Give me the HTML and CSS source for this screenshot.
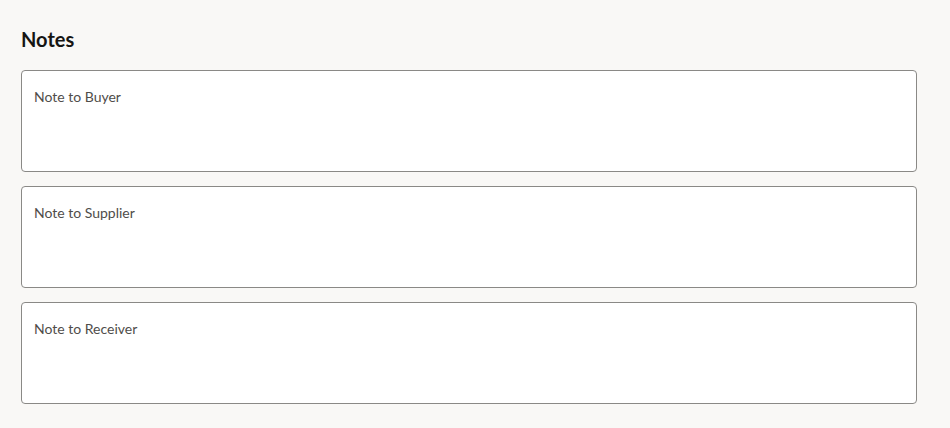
FILE: index.html
```html
<!DOCTYPE html>
<html lang="en">
<head>
    <meta charset="UTF-8">
    <title>Notes</title>
    <link rel="stylesheet" href="styles.css">
</head>
<body>
    <section class="notes">
        <h2>Notes</h2>
        <div class="note-list">
            <label class="note">
                <span class="note-label">Note to Buyer</span>
                <textarea class="note-input" rows="2"></textarea>
            </label>
            <label class="note">
                <span class="note-label">Note to Supplier</span>
                <textarea class="note-input" rows="2"></textarea>
            </label>
            <label class="note">
                <span class="note-label">Note to Receiver</span>
                <textarea class="note-input" rows="2"></textarea>
            </label>
        </div>
    </section>
</body>
</html>
```

FILE: styles.css
```css
/* General Styles */
body {
    margin: 0;
    padding: 0;
    background: #f9f8f6;
    font-family: Lato, "Noto Sans", sans-serif;
    color: #161513;
}

.notes {
    width: 896px;
    padding: 27px 0 0 21px;
}

h2 {
    margin: 0 0 19px 0;
    font-size: 20px;
    line-height: 24px;
    font-weight: 700;
    color: #161513;
}

.note-list {
    display: flex;
    flex-direction: column;
    gap: 14px;
}

.note {
    display: flex;
    flex-direction: column;
    height: 102px;
    box-sizing: border-box;
    padding: 17px 12px 0 12px;
    background: #ffffff;
    border: 1px solid #8a8986;
    border-radius: 4px;
}

.note-label {
    font-size: 14px;
    line-height: 18px;
    color: #4f4d4a;
}

.note-input {
    flex: 1;
    border: none;
    resize: none;
    outline: none;
    padding: 0;
    background: transparent;
    font-family: inherit;
}
```
